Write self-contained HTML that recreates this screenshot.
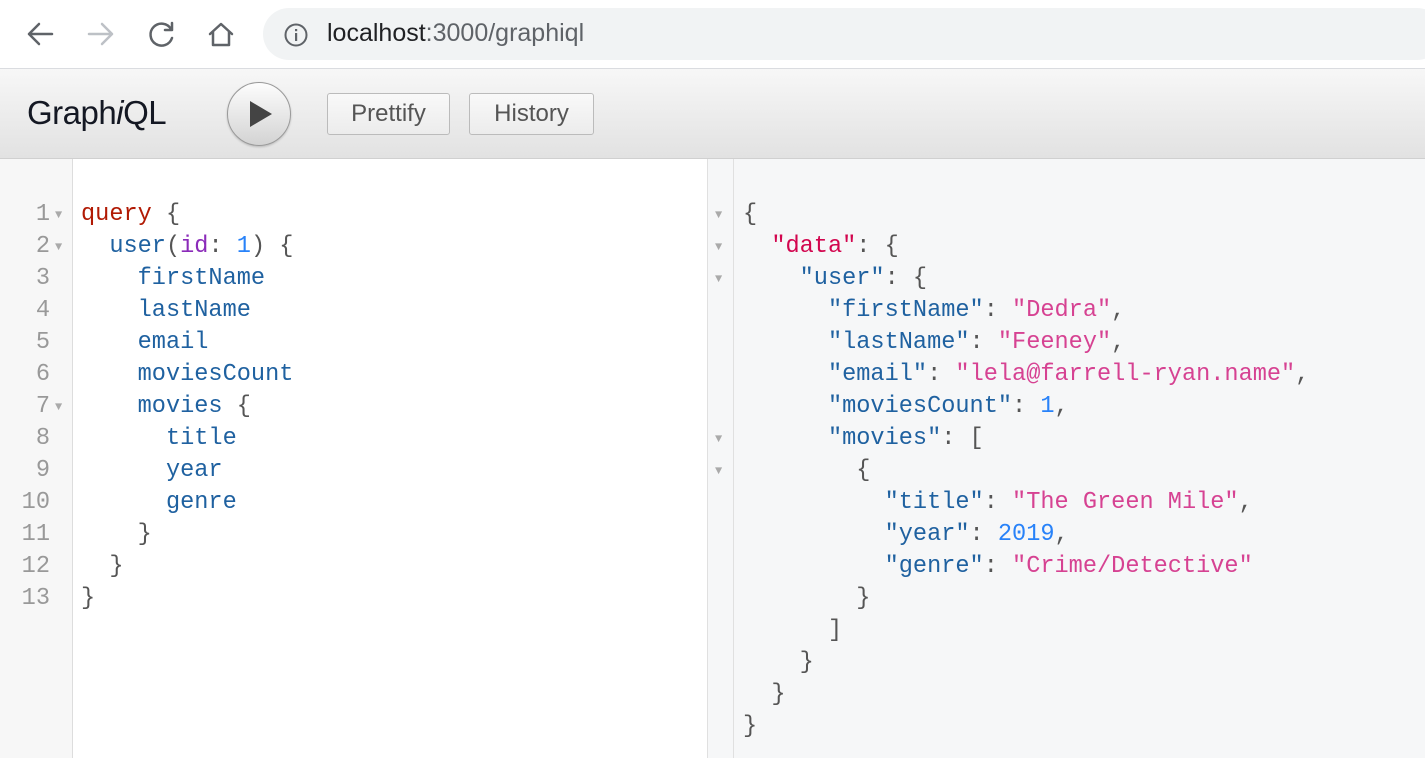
<!DOCTYPE html>
<html><head><style>
body{margin:0;width:1425px;height:758px;overflow:hidden;font-family:"Liberation Sans",sans-serif;background:#fff;position:relative}
.abs{position:absolute}
.code{font-family:"Liberation Mono",monospace;font-size:23.6px;line-height:32px;white-space:pre;color:#555}
.kw{color:#b11a04}.def{color:#1f61a0}.at{color:#8b2bb9}.num{color:#2882f9}.str{color:#d64292}.dk{color:#d2054e}
.btn{position:absolute;top:93px;height:42px;border:1px solid #bbb;border-radius:3px;background:linear-gradient(#f9f9f9,#ececec);font-size:24px;color:#555;line-height:40px;text-align:center;box-sizing:border-box}
.ln{color:#999;text-align:right}
.tri{font-size:12px;color:#aaa}
</style></head><body>
<div class="abs" style="left:0;top:0;width:1425px;height:68px;background:#fff;border-bottom:1px solid #dadce0"></div>
<svg class="abs" style="left:0;top:0" width="260" height="68" fill="none" stroke-width="2.5" stroke-linecap="round" stroke-linejoin="round">
<path d="M52 34H29M39 24L29 34L39 44" stroke="#5f6368"/>
<path d="M89 34H112M102 24L112 34L102 44" stroke="#bdc1c6"/>
<path d="M171 29A11 11 0 1 0 172 38M172 23V30H165" stroke="#5f6368"/>
<path d="M210 34L221 24L232 34M213 32V45H229V32" stroke="#5f6368"/>
</svg>
<div class="abs" style="left:263px;top:8px;width:1180px;height:52px;border-radius:26px;background:#f1f3f4"></div>
<svg class="abs" style="left:283px;top:22px" width="26" height="26"><circle cx="13" cy="13" r="10.5" fill="none" stroke="#5f6368" stroke-width="2"/><rect x="12" y="11" width="2.2" height="8" fill="#5f6368"/><rect x="12" y="7" width="2.2" height="2.2" fill="#5f6368"/></svg>
<div class="abs" style="left:327px;top:19px;font-size:25px;color:#202124">localhost<span style="color:#5f6368">:3000/graphiql</span></div>
<div class="abs" style="left:0;top:69px;width:1425px;height:89px;background:linear-gradient(#f7f7f7,#e2e2e2);border-bottom:1px solid #d0d0d0"></div>
<div class="abs" style="left:27px;top:94px;font-size:33px;color:#141823;letter-spacing:-0.5px">Graph<i>i</i>QL</div>
<div class="abs" style="left:227px;top:82px;width:62px;height:62px;border-radius:50%;border:1px solid #999;background:linear-gradient(#fdfdfd,#d3d3d3);box-shadow:0 1px 2px rgba(0,0,0,.2)"></div>
<svg class="abs" style="left:248px;top:100px" width="26" height="28"><path d="M2 1L24 14L2 27Z" fill="#444"/></svg>
<div class="btn" style="left:327px;width:123px">Prettify</div>
<div class="btn" style="left:469px;width:125px">History</div>
<div class="abs" style="left:0;top:159px;width:72px;height:599px;background:#f7f7f7;border-right:1px solid #ddd"></div>
<div class="abs" style="left:707px;top:159px;width:718px;height:599px;background:#f6f7f8;border-left:1px solid #e0e0e0"></div>
<div class="abs" style="left:707px;top:159px;width:26px;height:599px;border-right:1px solid #e0e0e0"></div>
<div class="abs code ln" style="left:0;top:199px;width:50px">1
2
3
4
5
6
7
8
9
10
11
12
13</div>
<div class="abs code tri" style="left:55px;top:199px">▼
▼




▼</div>
<div class="abs code" style="left:81px;top:199px"><span class="kw">query</span> {
  <span class="def">user</span>(<span class="at">id</span>: <span class="num">1</span>) {
    <span class="def">firstName</span>
    <span class="def">lastName</span>
    <span class="def">email</span>
    <span class="def">moviesCount</span>
    <span class="def">movies</span> {
      <span class="def">title</span>
      <span class="def">year</span>
      <span class="def">genre</span>
    }
  }
}</div>
<div class="abs code tri" style="left:715px;top:199px">▼
▼
▼




▼
▼</div>
<div class="abs code" style="left:743px;top:199px">{
  <span class="dk">"data"</span>: {
    <span class="def">"user"</span>: {
      <span class="def">"firstName"</span>: <span class="str">"Dedra"</span>,
      <span class="def">"lastName"</span>: <span class="str">"Feeney"</span>,
      <span class="def">"email"</span>: <span class="str">"lela@farrell-ryan.name"</span>,
      <span class="def">"moviesCount"</span>: <span class="num">1</span>,
      <span class="def">"movies"</span>: [
        {
          <span class="def">"title"</span>: <span class="str">"The Green Mile"</span>,
          <span class="def">"year"</span>: <span class="num">2019</span>,
          <span class="def">"genre"</span>: <span class="str">"Crime/Detective"</span>
        }
      ]
    }
  }
}</div>
</body></html>
